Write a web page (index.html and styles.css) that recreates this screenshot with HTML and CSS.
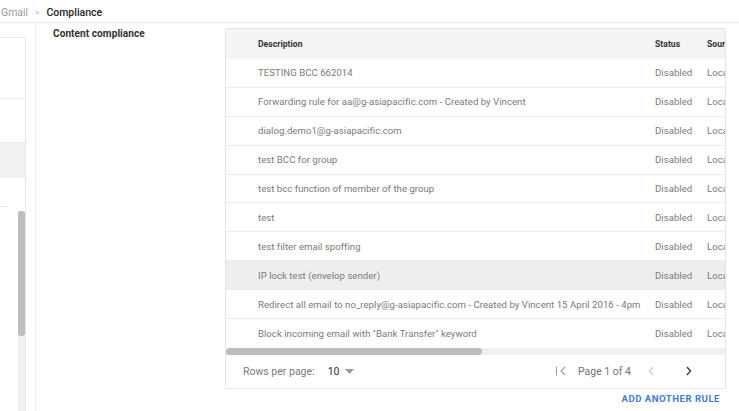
FILE: index.html
```html
<!DOCTYPE html>
<html lang="en">
<head>
<meta charset="utf-8">
<title>Compliance</title>
<link rel="stylesheet" href="styles.css">
</head>
<body>
  <header class="crumbs">
    <span class="crumb-parent">Gmail</span>
    <span class="crumb-sep">&gt;</span>
    <span class="crumb-current">Compliance</span>
  </header>

  <div class="main">
    <aside class="side">
      <div class="side-card">
        <div class="side-row side-row-tall"></div>
        <div class="side-row side-row-mid"></div>
        <div class="side-row side-row-active"></div>
        <div class="side-lower">
          <div class="side-list"><div class="side-rule"></div></div>
          <div class="side-scroll"><div class="side-thumb"></div></div>
        </div>
      </div>
    </aside>

    <section class="content">
      <div class="section-label">Content compliance</div>

      <div class="panel">
        <div class="table-clip">
          <div class="table">
            <div class="tr th">
              <div class="td desc">Description</div>
              <div class="td status">Status</div>
              <div class="td source">Source</div>
            </div>
            <div class="tr"><div class="td desc">TESTING BCC 662014</div><div class="td status">Disabled</div><div class="td source">Locally applied</div></div>
            <div class="tr"><div class="td desc">Forwarding rule for aa@g-asiapacific.com - Created by Vincent</div><div class="td status">Disabled</div><div class="td source">Locally applied</div></div>
            <div class="tr"><div class="td desc">dialog.demo1@g-asiapacific.com</div><div class="td status">Disabled</div><div class="td source">Locally applied</div></div>
            <div class="tr"><div class="td desc">test BCC for group</div><div class="td status">Disabled</div><div class="td source">Locally applied</div></div>
            <div class="tr"><div class="td desc">test bcc function of member of the group</div><div class="td status">Disabled</div><div class="td source">Locally applied</div></div>
            <div class="tr"><div class="td desc">test</div><div class="td status">Disabled</div><div class="td source">Locally applied</div></div>
            <div class="tr"><div class="td desc">test filter email spoffing</div><div class="td status">Disabled</div><div class="td source">Locally applied</div></div>
            <div class="tr hover"><div class="td desc">IP lock test (envelop sender)</div><div class="td status">Disabled</div><div class="td source">Locally applied</div></div>
            <div class="tr"><div class="td desc">Redirect all email to no_reply@g-asiapacific.com - Created by Vincent 15 April 2016 - 4pm</div><div class="td status">Disabled</div><div class="td source">Locally applied</div></div>
            <div class="tr last"><div class="td desc">Block incoming email with "Bank Transfer" keyword</div><div class="td status">Disabled</div><div class="td source">Locally applied</div></div>
          </div>
        </div>
        <div class="hscroll"><div class="hscroll-thumb"></div></div>

        <div class="pager">
          <div class="rows-per-page">
            <span class="pager-label">Rows per page:</span>
            <span class="pager-count">10</span>
            <svg class="caret" width="9" height="5" viewBox="0 0 9 5"><path d="M0 0h9L4.5 5z" fill="#9a9a9a"/></svg>
          </div>
          <div class="pager-nav">
            <svg class="nav-icon first" width="12" height="10" viewBox="0 0 12 10"><path d="M1.5 0.5v9" stroke="#9e9e9e" stroke-width="1.1" fill="none"/><path d="M10 1L6 5l4 4" stroke="#9e9e9e" stroke-width="1.1" fill="none"/></svg>
            <span class="page-text">Page 1 of 4</span>
            <svg class="nav-icon prev" width="6" height="10" viewBox="0 0 6 10"><path d="M5 1L1.5 5 5 9" stroke="#c4c4c4" stroke-width="1.1" fill="none"/></svg>
            <svg class="nav-icon next" width="6" height="10" viewBox="0 0 6 10"><path d="M1 1l3.5 4L1 9" stroke="#424242" stroke-width="1.5" fill="none"/></svg>
          </div>
        </div>
      </div>

      <div class="actions">
        <button class="add-rule" type="button">ADD ANOTHER RULE</button>
      </div>
    </section>
  </div>
</body>
</html>
```

FILE: styles.css
```css
* {
  box-sizing: border-box;
}

html, body {
  margin: 0;
  height: 100%;
  overflow: hidden;
  background: #ffffff;
  font-family: Roboto, "Liberation Sans", Arial, sans-serif;
  color: #757575;
}

/* breadcrumb bar */
.crumbs {
  height: 23px;
  border-bottom: 1px solid #ececec;
  display: flex;
  align-items: center;
  padding: 3px 0 0 1px;
  font-size: 10.5px;
}

.crumb-parent {
  color: #9a9a9a;
}

.crumb-sep {
  color: #a8a8a8;
  font-size: 8px;
  margin: 0 7px 0 7px;
}

.crumb-current {
  color: #262626;
  font-weight: 500;
}

.main {
  display: flex;
  height: calc(100% - 23px);
}

/* collapsed side navigation */
.side {
  width: 36px;
  flex: none;
  border-right: 1px solid #ececec;
  padding-top: 14px;
}

.side-card {
  width: 26px;
  height: 100%;
  border: 1px solid #e8e8e8;
  border-left: none;
  border-bottom: none;
  border-top-right-radius: 2px;
  display: flex;
  flex-direction: column;
}

.side-row {
  border-bottom: 1px solid #ededed;
}

.side-row-tall {
  height: 61px;
}

.side-row-mid {
  height: 44px;
}

.side-row-active {
  height: 35px;
  background: #f2f2f2;
  border-bottom: none;
}

.side-lower {
  flex: 1;
  display: flex;
}

.side-list {
  width: 18px;
  padding-top: 28px;
}

.side-rule {
  width: 7px;
  height: 1px;
  background: #e2e2e2;
}

.side-scroll {
  width: 7px;
  margin-top: 33px;
  background: #f0f0f0;
}

.side-thumb {
  height: 125px;
  background: #bdbdbd;
  border-radius: 3px;
}

/* content area */
.content {
  flex: 1;
  display: grid;
  grid-template-columns: 189px 501px;
  grid-template-rows: auto auto;
  align-content: start;
}

.section-label {
  padding: 5px 0 0 17px;
  font-size: 10.1px;
  font-weight: 700;
  color: #333333;
  letter-spacing: 0.05px;
}

.panel {
  margin-top: 5px;
  border: 1px solid #e4e4e4;
  border-radius: 2px;
  background: #fff;
}

.table-clip {
  overflow: hidden;
}

.table {
  width: 560px;
}

.tr {
  display: grid;
  grid-template-columns: 429px 52px 79px;
  height: 28.9px;
  align-items: center;
  border-bottom: 1px solid #ececec;
  font-size: 9.6px;
  letter-spacing: 0.03px;
  color: #7a7a7a;
}

.tr.last {
  border-bottom: none;
}

.tr.hover {
  background: #eeeeee;
}

.th {
  height: 30px;
  background: #f4f4f4;
  font-weight: 700;
  font-size: 8.6px;
  color: #333333;
  border-bottom: none;
}

.td {
  white-space: nowrap;
  overflow: hidden;
}

.desc {
  padding-left: 32px;
}

.hscroll {
  height: 7px;
  background: #f0f0f0;
}

.hscroll-thumb {
  width: 256px;
  height: 7px;
  background: #bcbcbc;
  border-radius: 4px;
}

/* pagination footer */
.pager {
  height: 33px;
  display: flex;
  align-items: center;
  justify-content: space-between;
  padding: 0 0 0 17px;
  font-size: 10.5px;
  color: #7a7a7a;
}

.rows-per-page {
  display: flex;
  align-items: center;
}

.pager-count {
  margin-left: 13px;
  color: #333;
}

.caret {
  margin-left: 6px;
}

.pager-nav {
  display: flex;
  align-items: center;
  padding-right: 33px;
}

.page-text {
  margin-left: 11px;
  color: #757575;
}

.nav-icon.prev {
  margin-left: 17px;
}

.nav-icon.next {
  margin-left: 32px;
}

.actions {
  grid-column: 2;
  display: flex;
  justify-content: flex-end;
  padding: 4px 6px 0 0;
}

.add-rule {
  border: none;
  background: none;
  padding: 0;
  font-family: inherit;
  font-size: 9.6px;
  font-weight: 700;
  color: #3f7be0;
  letter-spacing: 0.5px;
}
```
